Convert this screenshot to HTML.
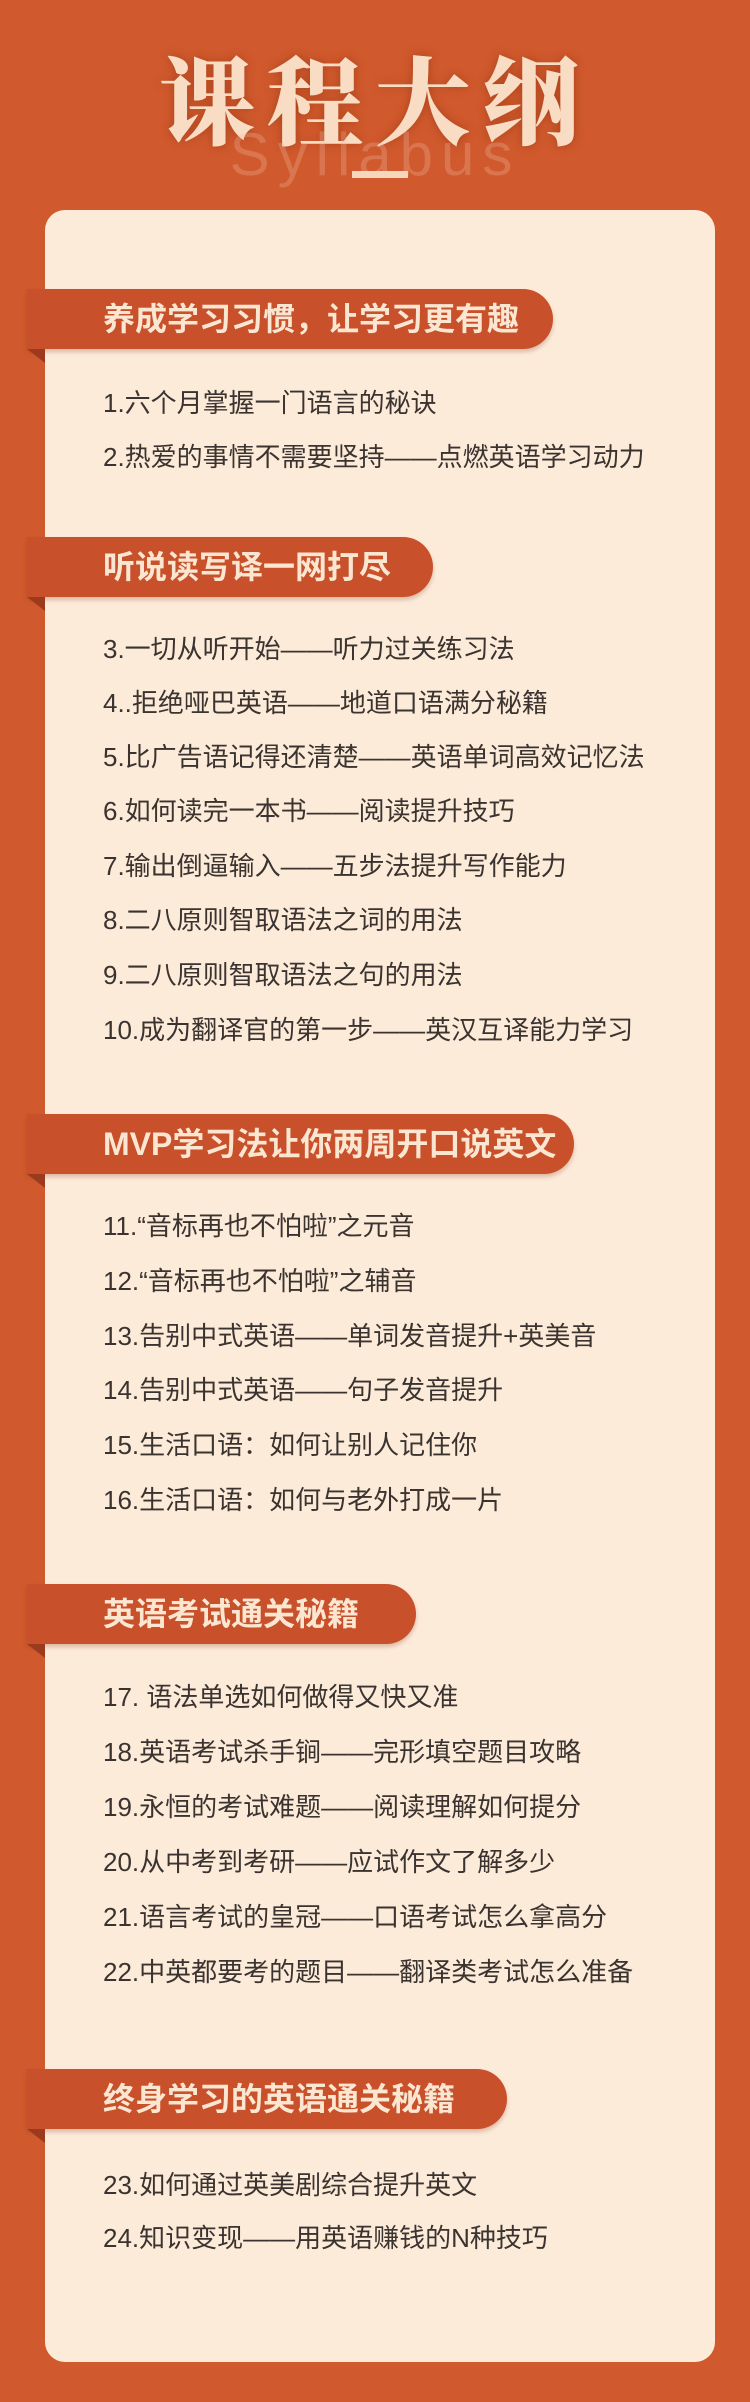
<!DOCTYPE html>
<html><head><meta charset="utf-8">
<style>
body{margin:0;width:750px;height:2402px;background:#d05a2d;position:relative;overflow:hidden;font-family:"Liberation Sans","Noto Sans CJK SC",sans-serif;}
.title{position:absolute;left:0;width:750px;top:42px;text-align:center;font-family:"Noto Serif CJK SC",serif;font-weight:900;font-size:96px;letter-spacing:12px;color:#f8dcc4;line-height:110px;text-shadow:0 0 10px rgba(120,30,0,.4);}
.syl{position:absolute;left:0;width:750px;top:120px;text-align:center;font-family:"Liberation Sans",sans-serif;font-size:60px;letter-spacing:8px;color:rgba(240,190,170,.28);}
.bar{position:absolute;left:352px;top:171px;width:56px;height:7px;background:#f6d7bd;}
.card{position:absolute;left:45px;top:210px;width:670px;height:2152px;background:#fdebd9;border-radius:20px;}
.h{position:absolute;left:27px;height:60px;background:#c8502a;border-radius:0 30px 30px 0;color:#fbe6d2;font-weight:bold;font-size:32px;line-height:60px;padding-left:76px;box-sizing:border-box;box-shadow:0 3px 4px rgba(120,40,10,.25);}
.h:after{content:"";position:absolute;left:0;bottom:-14px;border-top:14px solid #9b3a1c;border-left:18px solid transparent;}
.i{position:absolute;left:103px;font-size:26px;color:#3a3330;line-height:30px;}
</style></head><body>
<div class="title">课程大纲</div>
<div class="syl">Syllabus</div>
<div class="bar"></div>
<div class="card"></div>

<div class="h" style="top:289px;width:526px">养成学习习惯，让学习更有趣</div>
<div class="i" style="top:388px">1.六个月掌握一门语言的秘诀</div>
<div class="i" style="top:442px">2.热爱的事情不需要坚持——点燃英语学习动力</div>

<div class="h" style="top:537px;width:406px">听说读写译一网打尽</div>
<div class="i" style="top:634px">3.一切从听开始——听力过关练习法</div>
<div class="i" style="top:688px">4..拒绝哑巴英语——地道口语满分秘籍</div>
<div class="i" style="top:742px">5.比广告语记得还清楚——英语单词高效记忆法</div>
<div class="i" style="top:796px">6.如何读完一本书——阅读提升技巧</div>
<div class="i" style="top:851px">7.输出倒逼输入——五步法提升写作能力</div>
<div class="i" style="top:905px">8.二八原则智取语法之词的用法</div>
<div class="i" style="top:960px">9.二八原则智取语法之句的用法</div>
<div class="i" style="top:1015px">10.成为翻译官的第一步——英汉互译能力学习</div>

<div class="h" style="top:1114px;width:547px">MVP学习法让你两周开口说英文</div>
<div class="i" style="top:1211px">11.“音标再也不怕啦”之元音</div>
<div class="i" style="top:1266px">12.“音标再也不怕啦”之辅音</div>
<div class="i" style="top:1321px">13.告别中式英语——单词发音提升+英美音</div>
<div class="i" style="top:1375px">14.告别中式英语——句子发音提升</div>
<div class="i" style="top:1430px">15.生活口语：如何让别人记住你</div>
<div class="i" style="top:1485px">16.生活口语：如何与老外打成一片</div>

<div class="h" style="top:1584px;width:389px">英语考试通关秘籍</div>
<div class="i" style="top:1682px">17. 语法单选如何做得又快又准</div>
<div class="i" style="top:1737px">18.英语考试杀手锏——完形填空题目攻略</div>
<div class="i" style="top:1792px">19.永恒的考试难题——阅读理解如何提分</div>
<div class="i" style="top:1847px">20.从中考到考研——应试作文了解多少</div>
<div class="i" style="top:1902px">21.语言考试的皇冠——口语考试怎么拿高分</div>
<div class="i" style="top:1957px">22.中英都要考的题目——翻译类考试怎么准备</div>

<div class="h" style="top:2069px;width:480px">终身学习的英语通关秘籍</div>
<div class="i" style="top:2170px">23.如何通过英美剧综合提升英文</div>
<div class="i" style="top:2223px">24.知识变现——用英语赚钱的N种技巧</div>
</body></html>
